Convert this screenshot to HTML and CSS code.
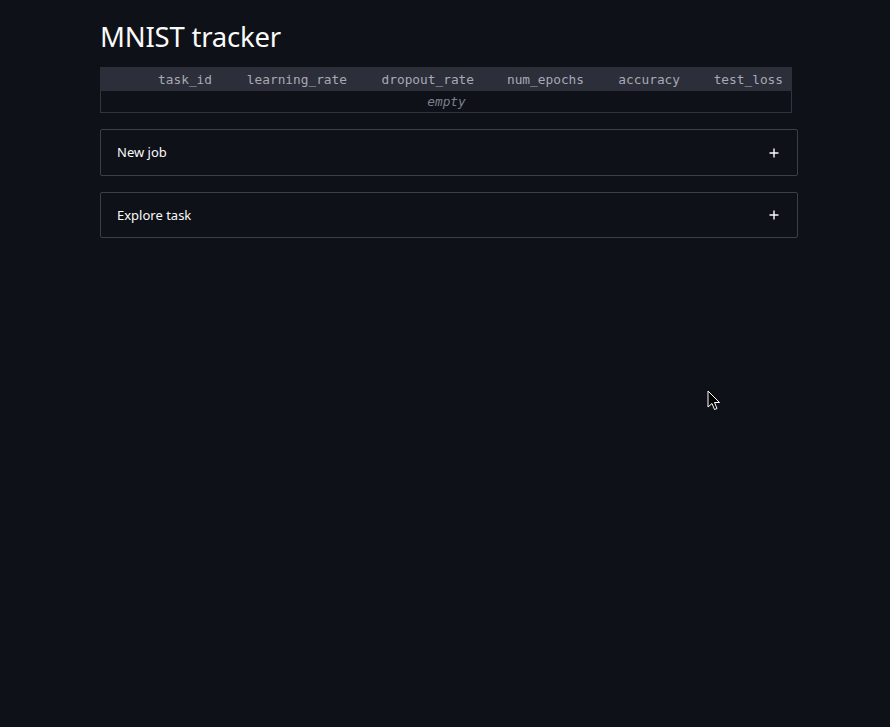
FILE: index.html
```html
<!DOCTYPE html>
<html>
<head>
<meta charset="utf-8">
<link rel="stylesheet" href="styles.css">
</head>
<body>
<main class="main">
  <h1 class="title">MNIST tracker</h1>
  <div class="table">
    <div class="row head">
      <div class="cell idx"></div>
      <div class="cell">task_id</div>
      <div class="cell">learning_rate</div>
      <div class="cell">dropout_rate</div>
      <div class="cell">num_epochs</div>
      <div class="cell">accuracy</div>
      <div class="cell last">test_loss</div>
    </div>
    <div class="empty">empty</div>
  </div>
  <div class="expander first">
    <span class="label">New job</span>
    <svg class="plus" width="10" height="10" viewBox="0 0 10 10"><path d="M5 0.5V9.5M0.5 5H9.5" stroke="#fafafa" stroke-width="1.4"/></svg>
  </div>
  <div class="expander">
    <span class="label">Explore task</span>
    <svg class="plus" width="10" height="10" viewBox="0 0 10 10"><path d="M5 0.5V9.5M0.5 5H9.5" stroke="#fafafa" stroke-width="1.4"/></svg>
  </div>
</main>
<svg class="cursor" width="14" height="22" viewBox="0 0 14 22"><path d="M1 1V17L5 13.5L7.5 19.5L10 18.5L7.5 12.5H12.5Z" fill="#000" stroke="#fff" stroke-width="1"/></svg>
</body>
</html>
```
FILE: styles.css
```css
html, body {
  margin: 0;
  padding: 0;
  background: #0e1117;
  height: 100%;
}
body {
  font-family: "Noto Sans", "Inter", sans-serif;
  color: #fafafa;
  position: relative;
  overflow: hidden;
}
.main {
  width: 698px;
  margin-left: 100px;
  padding-top: 19px;
}
.title {
  margin: 0;
  font-size: 27.5px;
  font-weight: 400;
  line-height: 36px;
  letter-spacing: -0.2px;
  color: #fafafa;
}
.table {
  width: 692px;
  margin-top: 12px;
}
.row {
  display: grid;
  grid-template-columns: 41px 88px 135px 127px 110px 96px 95px;
}
.head {
  background: #2c2e39;
  height: 24px;
}
.cell {
  font-family: "DejaVu Sans Mono", "Liberation Mono", monospace;
  font-size: 12.8px;
  color: #a7aab5;
  text-align: right;
  padding-right: 17px;
  line-height: 25px;
  white-space: nowrap;
}
.cell.idx { padding-right: 0; }
.cell.last { padding-right: 9px; }
.empty {
  height: 21px;
  border: 1px solid #33353e;
  border-top: none;
  text-align: center;
  font-family: "DejaVu Sans Mono", "Liberation Mono", monospace;
  font-style: italic;
  font-size: 12.8px;
  line-height: 21px;
  color: #7c7f8a;
  padding-left: 1px;
}
.expander {
  box-sizing: border-box;
  height: 46px;
  margin-top: 16px;
  border: 1px solid #3d3f46;
  border-radius: 2px;
  display: flex;
  align-items: center;
  justify-content: space-between;
  padding: 0 18px 0 16px;
}
.expander.first {
  height: 47px;
  margin-top: 16px;
}
.label {
  font-size: 13px;
  color: #fafafa;
  margin-top: -1px;
}
.plus { display: block; }
.cursor {
  position: absolute;
  left: 707px;
  top: 390px;
}
```
